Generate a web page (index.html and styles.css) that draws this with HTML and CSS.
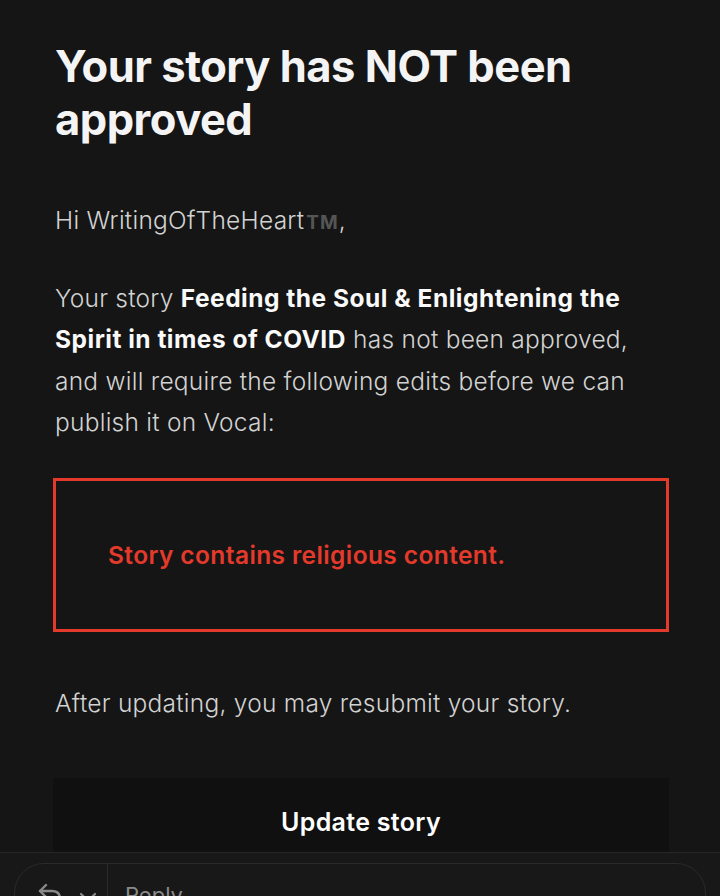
FILE: index.html
```html
<!DOCTYPE html>
<html lang="en">
<head>
    <meta charset="UTF-8">
    <meta name="viewport" content="width=device-width, initial-scale=1.0">
    <title>Your story has NOT been approved</title>
    <link rel="stylesheet" href="styles.css">
</head>

<body>
<div class="mail">
    <h1>Your story has NOT been approved</h1>

    <p class="greeting">Hi WritingOfTheHeart<span class="tm">TM</span>,</p>

    <p>
        Your story <b>Feeding the Soul &amp; Enlightening the Spirit in times of COVID</b> has not been approved,
        and will require the following edits before we can publish it on Vocal:
    </p>

    <div class="notice">
        Story contains religious content.
    </div>

    <p>After updating, you may resubmit your story.</p>

    <a class="button" href="#">Update story</a>
</div>

<div class="reply-bar">
    <div class="reply-pill">
        <div class="reply-actions">
            <svg width="26" height="22" viewBox="0 0 26 22" fill="none" stroke="#8a8a8a" stroke-width="2.4" stroke-linecap="round" stroke-linejoin="round">
                <path d="M9 3 L3 9 L9 15"/>
                <path d="M3 9 H15 Q23 9 23 17"/>
            </svg>
            <svg width="18" height="12" viewBox="0 0 18 12" fill="none" stroke="#8a8a8a" stroke-width="2.2" stroke-linecap="round" stroke-linejoin="round">
                <path d="M2 3 L9 10 L16 3"/>
            </svg>
        </div>
        <div class="reply-text">Reply</div>
    </div>
</div>
</body>
</html>
```

FILE: styles.css
```css
html,
body {
    margin: 0;
    background: #151515;
}

body {
    font-family: Inter, 'Noto Sans', sans-serif;
    color: #d2d2d2;
    height: 896px;
    overflow: hidden;
    position: relative;
}

.mail {
    padding: 0 53px 0 55px;
}

h1 {
    margin: 40px 0 0;
    font-size: 43.5px;
    line-height: 53px;
    font-weight: 700;
    letter-spacing: -0.5px;
    color: #f4f4f4;
}

p {
    margin: 0 0 34px;
    font-size: 24.5px;
    line-height: 41.6px;
    font-weight: 300;
    letter-spacing: 0.25px;
}

p b {
    font-weight: 700;
    letter-spacing: 0.5px;
    color: #fafafa;
}

.greeting {
    margin-top: 54px;
}

.tm {
    font-weight: 700;
    color: #555;
    font-size: 19px;
    margin-left: 2px;
    letter-spacing: 1px;
}

.notice {
    margin: 34px -2px 51px -2px;
    border: 3px solid #e33a2c;
    padding: 53px 52px;
    height: 42px;
    color: #e33a2c;
    font-size: 24.5px;
    font-weight: 600;
    letter-spacing: 0.4px;
    line-height: 42px;
}

.button {
    display: block;
    margin: 53px -2px 0 -2px;
    height: 90px;
    background: #101010;
    color: #fff;
    text-decoration: none;
    text-align: center;
    font-size: 25px;
    font-weight: 600;
    letter-spacing: 0.3px;
    line-height: 88px;
}

.reply-bar {
    position: absolute;
    left: 0;
    right: 0;
    top: 852px;
    height: 44px;
    background: #181818;
    border-top: 1px solid #262626;
    padding: 10px 14px 0;
}

.reply-pill {
    display: flex;
    height: 60px;
    border: 1px solid #2a2a2a;
    border-radius: 30px;
}

.reply-actions {
    display: flex;
    align-items: flex-start;
    gap: 16px;
    width: 93px;
    padding-left: 22px;
    padding-top: 18px;
    box-sizing: border-box;
    border-right: 1px solid #2a2a2a;
}

.reply-actions svg:last-child {
    margin-top: 9px;
}

.reply-text {
    padding: 18px 0 0 17px;
    font-size: 22px;
    color: #8a8a8a;
}
```
